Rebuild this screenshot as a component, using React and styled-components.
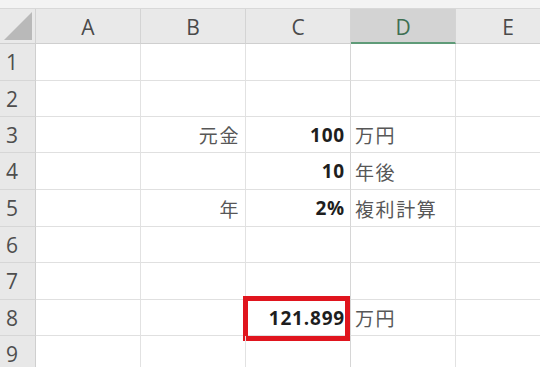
import React from "react";
import styled, { createGlobalStyle } from "styled-components";

const GlobalStyle = createGlobalStyle`
  html, body {
    margin: 0;
    padding: 0;
    background: #ffffff;
    overflow: hidden;
  }
  body {
    font-family: "Noto Sans CJK JP", "Noto Sans", sans-serif;
  }
`;

const COLUMNS = ["A", "B", "C", "D", "E"];
const ROW_HEIGHTS = [37, 36, 36, 37, 37, 36, 37, 36, 36];

const cells = {
  3: { B: { text: "元金" }, C: { text: "100", num: true }, D: { text: "万円" } },
  4: { C: { text: "10", num: true }, D: { text: "年後" } },
  5: { B: { text: "年" }, C: { text: "2%", num: true }, D: { text: "複利計算" } },
  8: { C: { text: "121.899", num: true, marked: true }, D: { text: "万円" } },
};

const Page = styled.div`
  width: 540px;
  height: 367px;
  overflow: hidden;
  display: flex;
  flex-direction: column;
`;

const TopStrip = styled.div`
  height: 8px;
  flex: none;
  background: #f3f3f3;
  border-bottom: 1px solid #d8d8d8;
`;

const Sheet = styled.div`
  display: grid;
  grid-template-columns: 36px repeat(5, 105px);
  grid-template-rows: 35px ${ROW_HEIGHTS.map((h) => `${h}px`).join(" ")};
`;

const Corner = styled.div`
  position: relative;
  background: #e9e9e9;
  border-right: 1px solid #d2d2d2;
  border-bottom: 1px solid #cfcfcf;
  &::after {
    content: "";
    position: absolute;
    right: 3px;
    bottom: 3px;
    width: 0;
    height: 0;
    border-left: 28px solid transparent;
    border-bottom: 28px solid #b9b9b9;
  }
`;

const ColHead = styled.div`
  display: flex;
  align-items: center;
  justify-content: center;
  background: ${(p) => (p.$active ? "#d3d3d3" : "#e9e9e9")};
  color: ${(p) => (p.$active ? "#3f6f52" : "#4a4a4a")};
  border-right: 1px solid #d4d4d4;
  border-bottom: ${(p) => (p.$active ? "2px solid #5f9b78" : "1px solid #cfcfcf")};
  font-family: "Open Sans", "Noto Sans", sans-serif;
  font-size: 21px;
  padding-top: 2px;
  box-sizing: border-box;
`;

const RowHead = styled.div`
  display: flex;
  align-items: center;
  padding-left: 6px;
  background: #e8e8e8;
  color: #4e4e4e;
  border-right: 1px solid #cfcfcf;
  border-bottom: 1px solid #d6d6d6;
  font-family: "Open Sans", "Noto Sans", sans-serif;
  font-size: 21px;
  box-sizing: border-box;
`;

const Cell = styled.div`
  position: relative;
  display: flex;
  align-items: center;
  justify-content: ${(p) => (p.$left ? "flex-start" : "flex-end")};
  padding: ${(p) => (p.$left ? "0 0 0 4px" : "0 5px 0 0")};
  border-right: 1px solid ${(p) => (p.$col === "C" ? "#d6d6d6" : "#e2e2e2")};
  border-bottom: 1px solid #e0e0e0;
  box-sizing: border-box;
  white-space: nowrap;
`;

const Kanji = styled.span`
  font-family: "Noto Sans CJK JP", sans-serif;
  font-size: 19px;
  color: #575757;
  letter-spacing: 1.6px;
`;

const Num = styled.span`
  font-family: "Open Sans", "Noto Sans", sans-serif;
  font-weight: 700;
  font-size: 19px;
  color: #1e1e1e;
  letter-spacing: 0.8px;
`;

const Mark = styled.div`
  position: absolute;
  left: -3px;
  right: 0;
  top: -4px;
  bottom: -6px;
  border: 5px solid #e0151e;
  pointer-events: none;
`;

export default function App() {
  return (
    <>
      <GlobalStyle />
      <Page>
        <TopStrip />
        <Sheet>
          <Corner />
          {COLUMNS.map((c) => (
            <ColHead key={c} $active={c === "D"}>
              {c}
            </ColHead>
          ))}
          {ROW_HEIGHTS.map((_, i) => {
            const row = i + 1;
            return (
              <React.Fragment key={row}>
                <RowHead>{row}</RowHead>
                {COLUMNS.map((c) => {
                  const cell = cells[row] && cells[row][c];
                  return (
                    <Cell key={c} $col={c} $left={c === "D"}>
                      {cell && (cell.num ? <Num>{cell.text}</Num> : <Kanji>{cell.text}</Kanji>)}
                      {cell && cell.marked && <Mark />}
                    </Cell>
                  );
                })}
              </React.Fragment>
            );
          })}
        </Sheet>
      </Page>
    </>
  );
}
